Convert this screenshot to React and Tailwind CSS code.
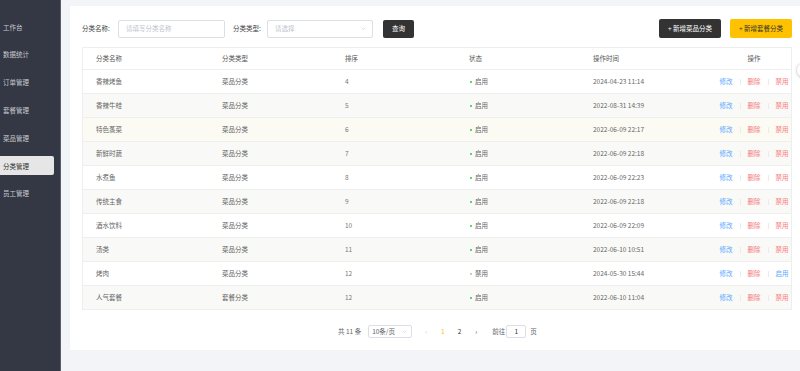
import React from "react";

const rows = [
  ["香辣烤鱼", "菜品分类", "4", true, "2024-04-23 11:14"],
  ["香辣牛蛙", "菜品分类", "5", true, "2022-08-31 14:39"],
  ["特色蒸菜", "菜品分类", "6", true, "2022-06-09 22:17"],
  ["新鲜时蔬", "菜品分类", "7", true, "2022-06-09 22:18"],
  ["水煮鱼", "菜品分类", "8", true, "2022-06-09 22:23"],
  ["传统主食", "菜品分类", "9", true, "2022-06-09 22:18"],
  ["酒水饮料", "菜品分类", "10", true, "2022-06-09 22:09"],
  ["汤类", "菜品分类", "11", true, "2022-06-10 10:51"],
  ["烤肉", "菜品分类", "12", false, "2024-05-30 15:44"],
  ["人气套餐", "套餐分类", "12", true, "2022-06-10 11:04"],
];

const rowBg = [
  "bg-white",
  "bg-[#f9f9f7]",
  "bg-[#fbfbf4]",
  "bg-[#f9f9f7]",
  "bg-white",
  "bg-[#f9f9f7]",
  "bg-white",
  "bg-[#f9f9f7]",
  "bg-white",
  "bg-[#f9f9f7]",
];

const menu = ["工作台", "数据统计", "订单管理", "套餐管理", "菜品管理", "分类管理", "员工管理"];

function Chevron({ className }) {
  return (
    <svg viewBox="0 0 10 6" className={className} fill="none" stroke="currentColor" strokeWidth="1">
      <path d="M1 1l4 4 4-4" />
    </svg>
  );
}

export default function App() {
  const cols = "grid grid-cols-[125px_123px_124px_124px_138px_1fr]";
  return (
    <div
      className="relative flex h-[371px] w-[800px] overflow-hidden bg-[#f3f4f7] text-[6.5px] leading-none"
      style={{ fontFamily: '"Noto Sans CJK SC", "Noto Sans", sans-serif' }}
    >
      {/* Sidebar */}
      <div className="flex h-full w-[61px] shrink-0 flex-col border-r border-[#5b5e6b] bg-[#343744] pt-[13px]">
        {menu.map((m) => (
          <div key={m} className="flex h-[27.8px] shrink-0 items-center pr-[6px]">
            {m === "分类管理" ? (
              <div className="flex h-[19px] w-[54px] items-center rounded-r-[2px] bg-[#e6e6e6] pl-[3px] text-[#333]">
                {m}
              </div>
            ) : (
              <div className="pl-[3px] text-[#c9cacf]">{m}</div>
            )}
          </div>
        ))}
      </div>

      {/* Main */}
      <div className="flex min-w-0 flex-1 flex-col pl-[9px] pt-[6px]">
        <div className="flex h-[344px] flex-col bg-white pl-[12px] pr-[8px] pt-[13px]">
          {/* Search bar */}
          <div className="flex h-[19px] items-center">
            <span className="w-[36px] text-[#444]">分类名称:</span>
            <div className="flex h-[18px] w-[107px] items-center rounded-[2px] border border-[#dcdfe6] pl-[7px] text-[#c0c4cc]">
              请填写分类名称
            </div>
            <span className="ml-[8px] w-[34px] text-[#444]">分类类型:</span>
            <div className="flex h-[18px] w-[106px] items-center justify-between rounded-[2px] border border-[#dcdfe6] pl-[7px] pr-[6px] text-[#c0c4cc]">
              请选择
              <Chevron className="h-[3px] w-[5px] text-[#c0c4cc]" />
            </div>
            <div className="ml-[10px] flex h-[18px] w-[31px] items-center justify-center rounded-[2px] bg-[#333333] text-white">
              查询
            </div>
            <div className="ml-auto flex h-[19px] w-[62px] items-center justify-center rounded-[2px] bg-[#333333] text-white">
              + 新增菜品分类
            </div>
            <div className="ml-[9px] flex h-[19px] w-[62px] items-center justify-center rounded-[2px] bg-[#ffc200] text-[#333]">
              + 新增套餐分类
            </div>
          </div>

          {/* Table */}
          <div className="mt-[9px] border border-b-0 border-[#eeeeee]">
            <div className={`${cols} h-[22px] items-center border-b border-[#eeeeee] bg-white text-[#555]`}>
              <div className="pl-[13px]">分类名称</div>
              <div className="pl-[14px]">分类类型</div>
              <div className="pl-[14px]">排序</div>
              <div className="pl-[14px]">状态</div>
              <div className="pl-[14px]">操作时间</div>
              <div className="text-center">操作</div>
            </div>
            {rows.map((r, i) => (
              <div
                key={i}
                className={`${cols} h-[24px] items-center border-b border-[#efefef] text-[#666] ${rowBg[i]}`}
              >
                <div className="pl-[13px]">{r[0]}</div>
                <div className="pl-[14px]">{r[1]}</div>
                <div className="pl-[14px] text-[#777]">{r[2]}</div>
                <div className="flex items-center pl-[15px]">
                  <span
                    className={`mr-[3px] h-[2px] w-[2px] rounded-full ${r[3] ? "bg-[#22c55e]" : "bg-[#bbbbbb]"}`}
                  />
                  {r[3] ? "启用" : "禁用"}
                </div>
                <div className="pl-[14px] text-[#666]">{r[4]}</div>
                <div className="flex items-center justify-center">
                  <span className="text-[#5aa8ff]">修改</span>
                  <span className="mx-[7px] h-[6px] w-px bg-[#ebebeb]" />
                  <span className="text-[#f67a7a]">删除</span>
                  <span className="mx-[7px] h-[6px] w-px bg-[#ebebeb]" />
                  <span className={r[3] ? "text-[#f67a7a]" : "text-[#5aa8ff]"}>{r[3] ? "禁用" : "启用"}</span>
                </div>
              </div>
            ))}
          </div>

          {/* Pagination */}
          <div className="mt-[14px] flex h-[14px] items-center pl-[256px] text-[#606266]">
            <span>共 11 条</span>
            <div className="ml-[7px] flex h-[13px] w-[44px] items-center justify-between rounded-[2px] border border-[#dcdfe6] pl-[3px] pr-[4px] text-[#606266]">
              10条/页
              <Chevron className="h-[3px] w-[5px] text-[#c0c4cc]" />
            </div>
            <span className="ml-[13px] text-[#c0c4cc]">‹</span>
            <span className="ml-[14px] text-[#ffc200]">1</span>
            <span className="ml-[13px] text-[#333]">2</span>
            <span className="ml-[14px] text-[#333]">›</span>
            <span className="ml-[15px]">前往</span>
            <div className="ml-[1px] flex h-[13px] w-[20px] items-center justify-center rounded-[2px] border border-[#dcdfe6] text-[#333]">
              1
            </div>
            <span className="ml-[4px]">页</span>
          </div>
        </div>
      </div>

      {/* floating edge circle */}
      <div className="absolute right-[-12px] top-[62px] h-[16px] w-[16px] rounded-full border border-[#e5e5e5] bg-white shadow-sm" />
    </div>
  );
}
